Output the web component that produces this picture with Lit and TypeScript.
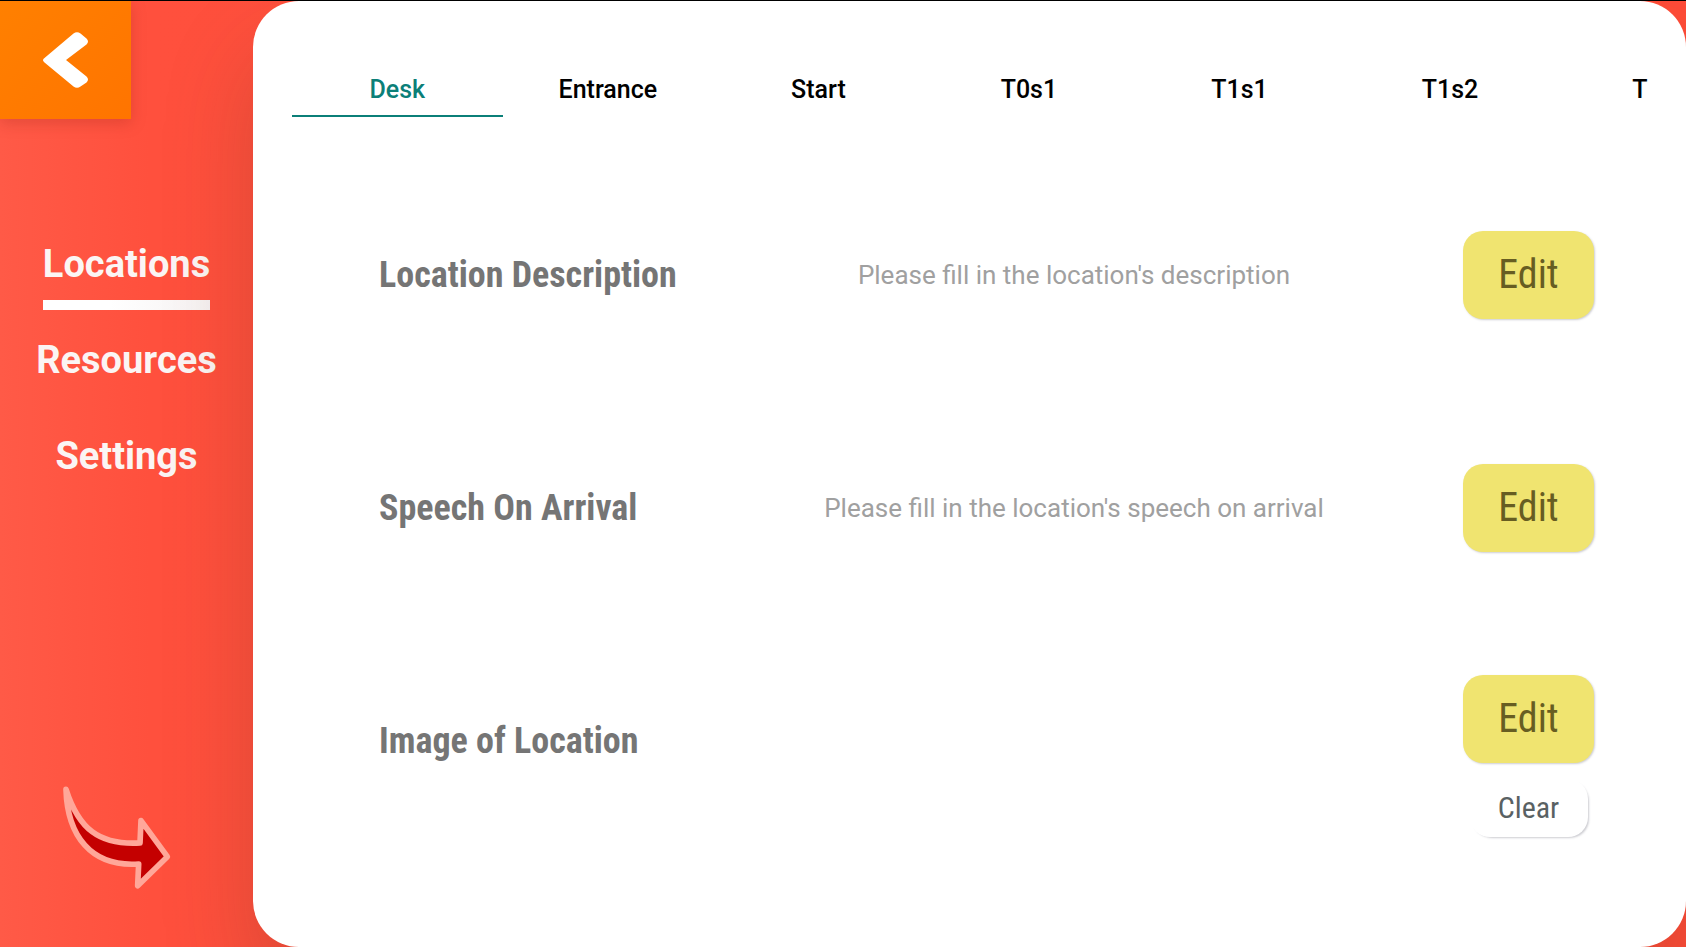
import { LitElement, html, css, nothing } from "lit";
import { customElement, state } from "lit/decorators.js";

interface Field {
  id: string;
  label: string;
  hint: string;
  clearable: boolean;
}

const SECTIONS = ["Locations", "Resources", "Settings"];
const TABS = ["Desk", "Entrance", "Start", "T0s1", "T1s1", "T1s2", "T1s3"];
const FIELDS: Field[] = [
  { id: "description", label: "Location Description", hint: "Please fill in the location's description", clearable: false },
  { id: "speech", label: "Speech On Arrival", hint: "Please fill in the location's speech on arrival", clearable: false },
  { id: "image", label: "Image of Location", hint: "", clearable: true },
];

@customElement("app-root")
export class AppRoot extends LitElement {
  @state() private section = SECTIONS[0];
  @state() private tab = TABS[0];

  static styles = css`
    :host {
      display: block;
      font-family: Roboto, "Liberation Sans", sans-serif;
    }
    * {
      box-sizing: border-box;
    }
    button {
      font: inherit;
      border: 0;
      padding: 0;
      background: none;
      cursor: pointer;
    }
    .app {
      display: grid;
      grid-template-columns: 253px minmax(0, 1fr);
      height: 100vh;
      overflow: hidden;
      border-top: 1px solid #000;
      background: linear-gradient(90deg, #ff5a47 0, #ff503d 150px, #ff4c38 100%);
    }
    .side {
      display: flex;
      flex-direction: column;
      align-items: flex-start;
    }
    .back {
      width: 131px;
      height: 118px;
      background: linear-gradient(135deg, #ff8000, #ff7400);
      box-shadow: 0 4px 14px rgba(140, 30, 20, 0.25);
    }
    .back svg {
      display: block;
      width: 131px;
      height: 118px;
    }
    .sections {
      align-self: stretch;
      display: flex;
      flex-direction: column;
      align-items: center;
      gap: 21px;
      margin-top: 116px;
    }
    .section {
      height: 75px;
      border-bottom: 10px solid transparent;
      font-size: 38px;
      font-weight: 700;
      line-height: 58px;
      color: #fbf5f4;
      text-decoration: none;
      white-space: nowrap;
    }
    .section.current {
      border-image: linear-gradient(90deg, #fff 40%, #f6f2f2) 1;
    }
    .hint-arrow {
      width: 114px;
      height: 108px;
      margin: auto 0 55px 60px;
    }
    .panel {
      position: relative;
      display: flex;
      flex-direction: column;
      padding: 57px 38px 90px 39px;
      background: #fff;
      border-radius: 46px;
      box-shadow: 0 50px 90px rgba(100, 50, 30, 0.24);
    }
    .tabs {
      display: flex;
      flex: none;
      overflow: hidden;
      margin-bottom: 41px;
    }
    .tab {
      flex: 0 0 calc(100% / 6.44);
      height: 59px;
      padding-top: 6px;
      border-bottom: 2px solid transparent;
      font-size: 25px;
      font-weight: 500;
      color: #000;
    }
    .tab.current {
      color: #0b7f78;
      border-bottom-color: #0b7f78;
    }
    .fields {
      flex: 1;
      display: grid;
      grid-auto-rows: 1fr;
      padding: 0 54px 0 87px;
    }
    .field {
      display: grid;
      grid-template-columns: 306px minmax(0, 1fr) 131px;
      align-items: center;
    }
    .label {
      margin: 0;
      font-family: "Roboto Condensed", Roboto, sans-serif;
      font-size: 36px;
      font-weight: 700;
      color: #757575;
      white-space: nowrap;
    }
    .hint {
      margin: 0;
      font-size: 26px;
      font-weight: 400;
      color: #a0a0a0;
      text-align: center;
    }
    .actions {
      display: flex;
      flex-direction: column;
      align-items: center;
      gap: 16px;
    }
    .clearable .actions {
      padding-top: 30px;
    }
    .edit,
    .clear {
      font-family: "Roboto Condensed", Roboto, sans-serif;
    }
    .edit {
      width: 131px;
      height: 88px;
      border-radius: 20px;
      background: #f0e470;
      box-shadow: 1px 1px 2px rgba(60, 60, 80, 0.25);
      font-size: 40px;
      color: #675d22;
    }
    .clear {
      width: 118px;
      height: 58px;
      border-radius: 20px;
      background: #fff;
      box-shadow: 2px 2px 2px -1px rgba(60, 60, 80, 0.25);
      font-size: 30px;
      color: #596163;
    }
  `;

  private renderField(field: Field) {
    return html`
      <section class="field ${field.clearable ? "clearable" : ""}" aria-labelledby=${field.id}>
        <h2 class="label" id=${field.id}>${field.label}</h2>
        <p class="hint">${field.hint}</p>
        <div class="actions">
          <button class="edit" type="button">Edit</button>
          ${field.clearable ? html`<button class="clear" type="button">Clear</button>` : nothing}
        </div>
      </section>
    `;
  }

  render() {
    return html`
      <div class="app">
        <aside class="side">
          <button class="back" type="button" aria-label="Back">
            <svg viewBox="0 0 131 118" aria-hidden="true">
              <path
                d="M44.500 57 L73.500 32.500 Q77 30 80.500 32.500 L86.500 37.500 Q89.500 40.500 86.500 43.500 L66 59 L86.500 75.500 Q89.500 78.500 86.500 81.500 L80.500 85.500 Q77 88 73.500 85.500 L44.500 61.500 Q41.500 59 44.500 57 Z"
                fill="#fff"
              />
            </svg>
          </button>
          <nav class="sections">
            ${SECTIONS.map(
              (name) => html`<a
                class="section ${name === this.section ? "current" : ""}"
                href="#${name.toLowerCase()}"
                @click=${() => (this.section = name)}
                >${name}</a
              >`
            )}
          </nav>
          <svg class="hint-arrow" viewBox="120 72 342 324" aria-hidden="true">
            <path
              d="M138 88 C176 206 236 256 360 249 L363 182 L442 290 L353 377 L356 312 C212 322 142 226 138 88 Z"
              fill="#c40000"
              stroke="#ffa799"
              stroke-width="17"
              stroke-linejoin="round"
            />
          </svg>
        </aside>
        <main class="panel">
          <div class="tabs" role="tablist">
            ${TABS.map(
              (name) => html`<button
                class="tab ${name === this.tab ? "current" : ""}"
                type="button"
                role="tab"
                aria-selected=${name === this.tab ? "true" : "false"}
                @click=${() => (this.tab = name)}
              >
                ${name}
              </button>`
            )}
          </div>
          <div class="fields">${FIELDS.map((field) => this.renderField(field))}</div>
        </main>
      </div>
    `;
  }
}
